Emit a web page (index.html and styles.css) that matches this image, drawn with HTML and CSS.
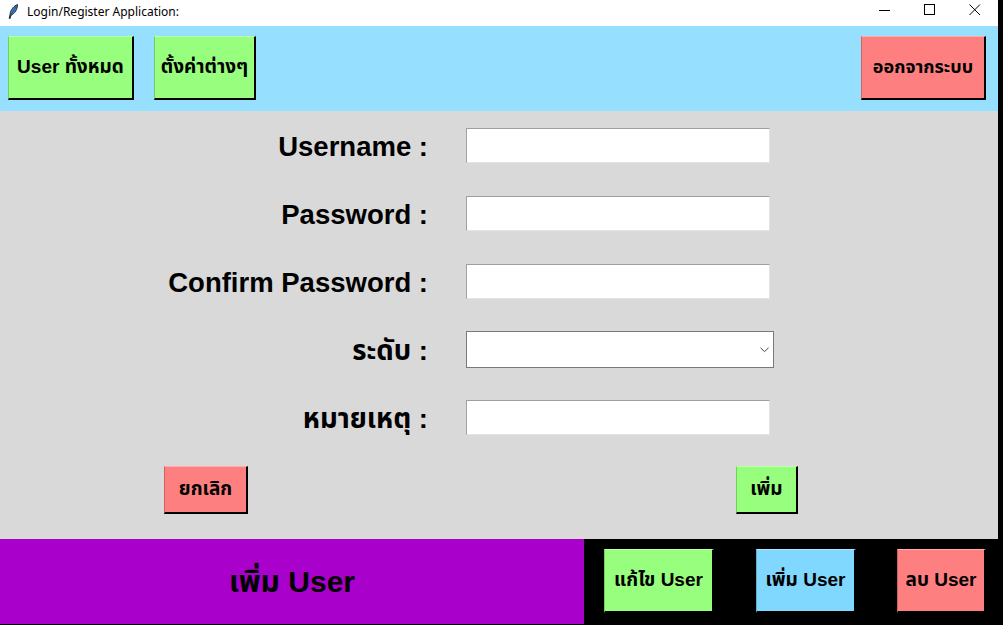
FILE: index.html
```html
<!DOCTYPE html>
<html lang="th">
<head>
    <meta charset="UTF-8">
    <title>Login/Register Application:</title>
    <link rel="stylesheet" href="styles.css">
</head>
<body>
    <div class="window">
        <!-- Title bar -->
        <div class="titlebar">
            <svg class="feather" width="11" height="15" viewBox="0 0 11 15">
                <path d="M9.5 0.6 C6 1.8 2.6 5.5 2 10.5 L1.2 14.4 L2.2 14.4 L2.9 11.4 C6.8 9.6 9.6 5.2 9.5 0.6 Z" fill="#4a86c8" stroke="#1b2a44" stroke-width="1"/>
                <path d="M8.5 2 L2.6 11.4" stroke="#1b2a44" stroke-width="0.7"/>
            </svg>
            <span class="title-text">Login/Register Application:</span>
            <div class="win-controls">
                <svg width="12" height="12" viewBox="0 0 12 12"><line x1="0" y1="6.5" x2="11" y2="6.5" stroke="#000" stroke-width="1"/></svg>
                <svg width="12" height="12" viewBox="0 0 12 12"><rect x="0.5" y="0.5" width="10" height="10" fill="none" stroke="#000" stroke-width="1"/></svg>
                <svg width="12" height="12" viewBox="0 0 12 12"><path d="M0.5 0.5 L11 11 M11 0.5 L0.5 11" stroke="#000" stroke-width="1"/></svg>
            </div>
        </div>

        <!-- Top menu -->
        <div class="topbar">
            <button class="btn green btn-users">User ทั้งหมด</button>
            <button class="btn green btn-settings">ตั้งค่าต่างๆ</button>
            <button class="btn red btn-logout">ออกจากระบบ</button>
        </div>

        <!-- Form -->
        <div class="form-area">
            <div class="form-grid">
                <label class="form-label">Username :</label>
                <input class="entry" type="text">

                <label class="form-label">Password :</label>
                <input class="entry" type="password">

                <label class="form-label">Confirm Password :</label>
                <input class="entry" type="password">

                <label class="form-label">ระดับ :</label>
                <div class="combo">
                    <svg width="9" height="6" viewBox="0 0 9 6"><path d="M0.5 0.8 L4.5 4.6 L8.5 0.8" fill="none" stroke="#444" stroke-width="1"/></svg>
                </div>

                <label class="form-label">หมายเหตุ :</label>
                <input class="entry" type="text">
            </div>

            <div class="form-actions">
                <button class="btn red btn-cancel">ยกเลิก</button>
                <button class="btn green btn-add">เพิ่ม</button>
            </div>
        </div>

        <!-- Bottom bar -->
        <div class="bottombar">
            <div class="page-title">เพิ่ม User</div>
            <div class="mode-buttons">
                <button class="btn green btn-edit">แก้ไข User</button>
                <button class="btn blue btn-new">เพิ่ม User</button>
                <button class="btn red btn-delete">ลบ User</button>
            </div>
        </div>
    </div>
</body>
</html>
```

FILE: styles.css
```css
body {
    margin: 0;
    padding: 0;
    width: 1003px;
    height: 625px;
    overflow: hidden;
    background-color: #000000;
    font-family: 'Liberation Sans', 'Noto Sans Thai', Tahoma, Arial, sans-serif;
    color: #000000;
}

.window {
    width: 998px;
    height: 625px;
    display: flex;
    flex-direction: column;
}

/* Title bar */
.titlebar {
    height: 26px;
    background-color: #ffffff;
    display: flex;
    align-items: center;
    padding-left: 8px;
}

.feather {
    margin-right: 8px;
    margin-top: -3px;
}

.title-text {
    font-family: 'Noto Sans', 'Liberation Sans', sans-serif;
    font-size: 12px;
    margin-top: -3px;
}

.win-controls {
    margin-left: auto;
    display: flex;
    gap: 33px;
    padding-right: 17px;
    margin-top: -6px;
}

/* Buttons */
.btn {
    font-family: 'Liberation Sans', 'Noto Sans Thai', Tahoma, Arial, sans-serif;
    font-weight: 700;
    font-size: 19px;
    color: #000000;
    border-style: solid;
    border-width: 1px 2px 2px 1px;
    border-color: rgba(255, 255, 255, 0.35) #000000 #000000 rgba(0, 0, 0, 0.2);
    padding: 0;
    cursor: pointer;
}

.green { background-color: #98fe7e; }
.red { background-color: #fe7f7f; }
.blue { background-color: #80d8fe; }

/* Top bar */
.topbar {
    height: 85px;
    box-sizing: border-box;
    background-color: #97dffe;
    display: flex;
    align-items: flex-start;
    padding: 10px 12px 0 8px;
}

.topbar .btn {
    height: 64px;
}

.btn-users { width: 126px; }
.btn-settings { width: 102px; margin-left: 20px; }
.btn-logout { width: 125px; margin-left: auto; font-size: 18px; }

/* Form */
.form-area {
    height: 428px;
    box-sizing: border-box;
    background-color: #d9d9d9;
    padding-top: 17px;
}

.form-grid {
    display: grid;
    grid-template-columns: 428px 308px;
    column-gap: 38px;
    row-gap: 33px;
    align-items: center;
}

.form-label {
    text-align: right;
    font-size: 27.5px;
    font-weight: 700;
    height: 35px;
    line-height: 37px;
    white-space: nowrap;
}

.entry {
    width: 304px;
    height: 35px;
    box-sizing: border-box;
    margin: 0;
    border-style: solid;
    border-width: 1px;
    border-color: #a0a0a0 #e3e3e3 #e3e3e3 #a0a0a0;
    background-color: #ffffff;
    outline: none;
}

.combo {
    width: 308px;
    height: 37px;
    box-sizing: border-box;
    margin: -1px 0;
    border: 1px solid #7a7a7a;
    background-color: #ffffff;
    display: flex;
    align-items: center;
    justify-content: flex-end;
    padding-right: 4px;
}

.form-actions {
    display: flex;
    align-items: flex-start;
    padding: 0 200px 0 164px;
    margin-top: 31px;
}

.form-actions .btn {
    height: 48px;
}

.btn-cancel { width: 84px; }
.btn-add { width: 62px; margin-left: auto; }

/* Bottom bar */
.bottombar {
    height: 86px;
    display: flex;
    border-bottom: 1px solid #000000;
    box-sizing: border-box;
}

.page-title {
    width: 584px;
    background-color: #aa00cc;
    display: flex;
    align-items: center;
    justify-content: center;
    font-size: 30px;
    font-weight: 700;
    padding-top: 2px;
    box-sizing: border-box;
}

.mode-buttons {
    flex: 1;
    background-color: #000000;
    display: flex;
    align-items: flex-start;
    padding: 10px 0 0 20px;
}

.mode-buttons .btn {
    height: 64px;
}

.btn-edit { width: 110px; }
.btn-new { width: 100px; margin-left: 42px; }
.btn-delete { width: 89px; margin-left: 41px; }
```
